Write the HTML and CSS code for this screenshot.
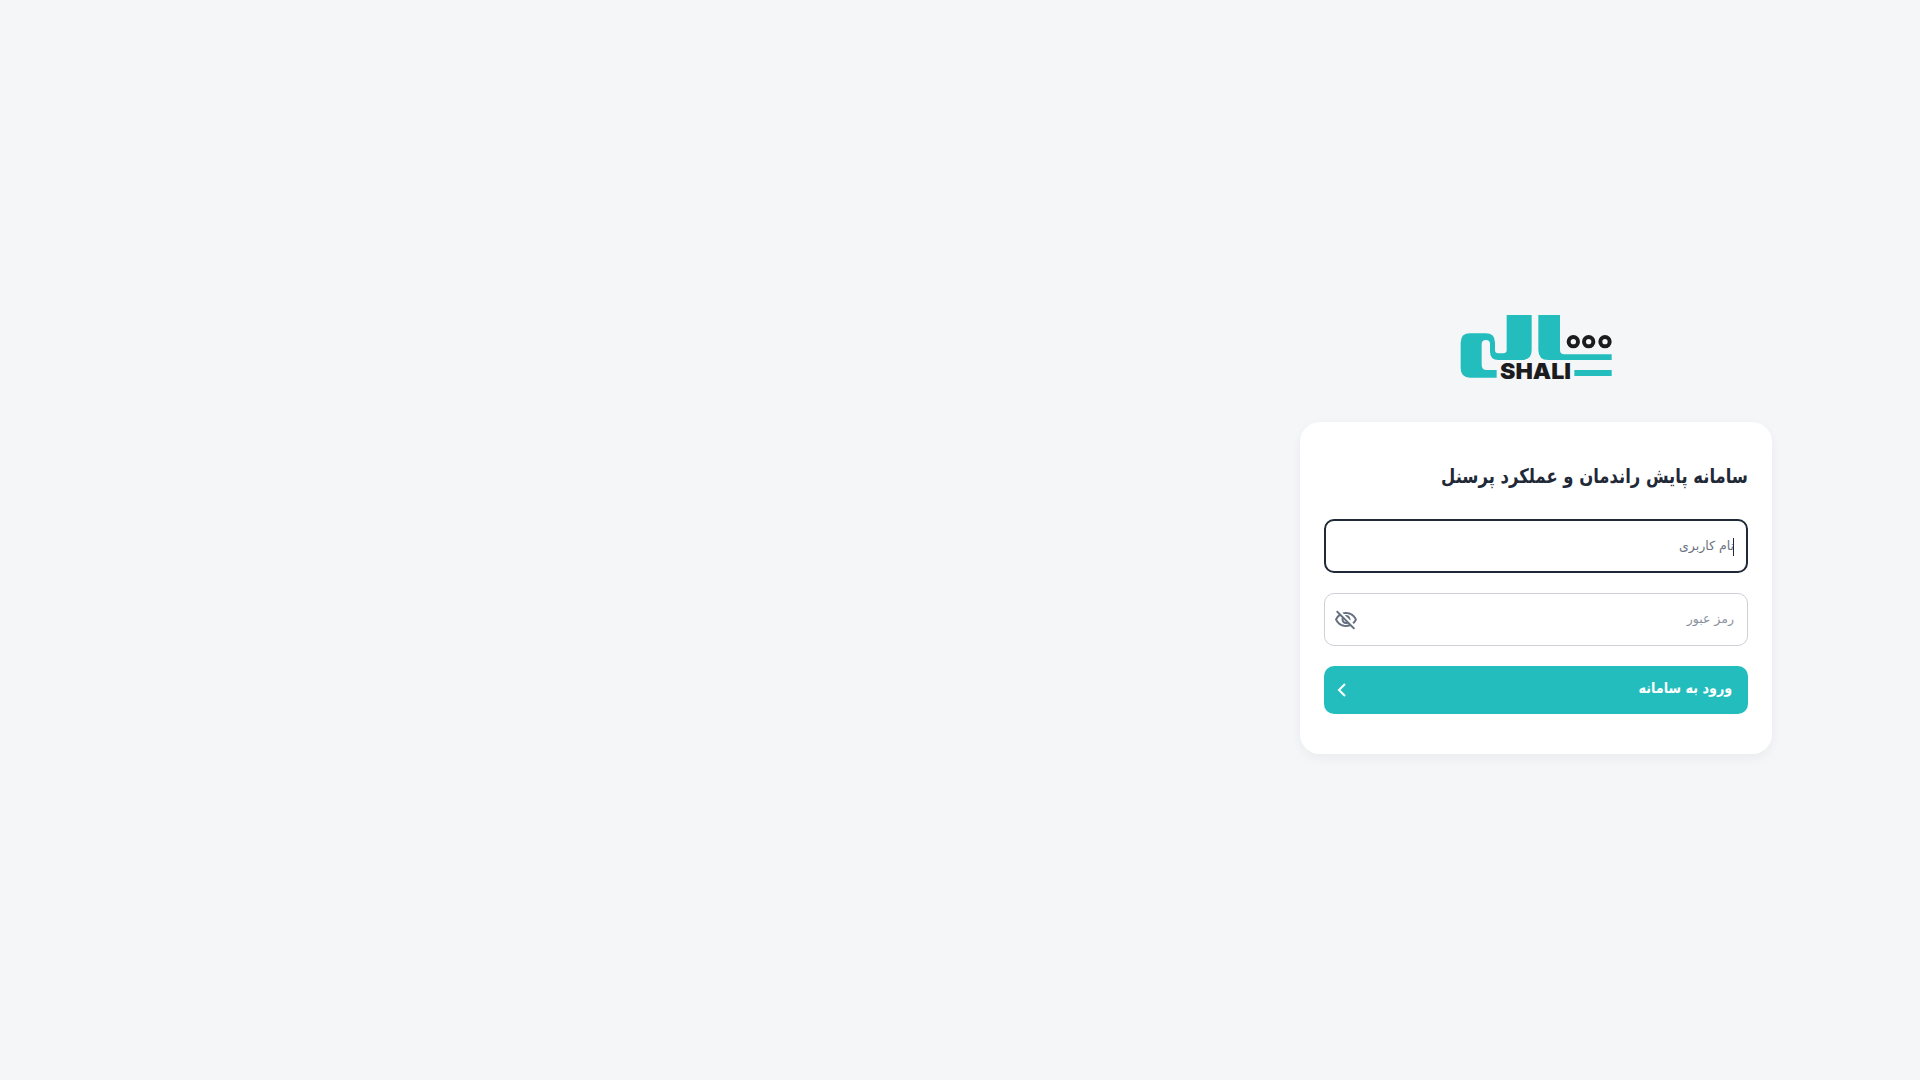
FILE: index.html
```html
<!DOCTYPE html>
<html lang="fa" dir="rtl">
<head>
  <meta charset="UTF-8">
  <meta name="viewport" content="width=device-width, initial-scale=1.0">
  <title>سامانه پایش راندمان و عملکرد پرسنل</title>
  <link rel="stylesheet" href="styles.css">
</head>
<body>
<div class="login-side">
  <svg class="logo" viewBox="60 45 456 195" width="152" height="65" aria-label="Shali">
    <path class="logo-teal" d="M62 128Q62 100 90 100L137 100Q165 100 165 128L165 150Q165 160 175 160L190 160Q200 160 200 150L200 45L275 45L275 150Q275 180 245 180L175 180Q150 180 150 155L150 132Q150 120 138 120Q125 120 125 132L125 195Q125 210 140 210L170 210L170 233L90 233Q62 233 62 205Z"/>
    <path class="logo-teal" d="M295 45L360 45L360 150Q360 163 373 163L515 163L515 180L325 180Q295 180 295 150Z"/>
    <rect class="logo-teal" x="403" y="210" width="112" height="18"/>
    <circle class="logo-dot" cx="400" cy="125" r="14"/>
    <circle class="logo-dot" cx="446" cy="125" r="14"/>
    <circle class="logo-dot" cx="495" cy="125" r="14"/>
    <text class="logo-text" x="180" y="238" textLength="213" lengthAdjust="spacingAndGlyphs" direction="ltr">SHALI</text>
  </svg>
  <div class="card">
    <h1 class="card-title">سامانه پایش راندمان و عملکرد پرسنل</h1>
    <form class="login-form">
      <div class="field field-active">
        <input class="field-input" type="text" placeholder="نام کاربری">
        <span class="caret"></span>
      </div>
      <div class="field">
        <input class="field-input" type="password" placeholder="رمز عبور">
        <svg class="eye" viewBox="0 0 24 24" width="24" height="24">
          <path d="M12 6c3.79 0 7.17 2.13 8.82 5.5-.59 1.22-1.42 2.27-2.41 3.12l1.41 1.41c1.39-1.23 2.49-2.77 3.18-4.53C21.27 7.11 17 4 12 4c-1.27 0-2.49.2-3.64.57l1.65 1.65C10.66 6.09 11.32 6 12 6zm-1.07 1.14L13 9.21c.57.25 1.03.71 1.28 1.28l2.07 2.07c.08-.34.14-.7.14-1.07C16.5 9.01 14.48 7 12 7c-.37 0-.72.05-1.07.14zM2.01 3.87l2.68 2.68C3.06 7.83 1.77 9.53 1 11.5 2.73 15.89 7 19 12 19c1.52 0 2.98-.29 4.32-.82l3.42 3.42 1.41-1.41L3.42 2.45 2.01 3.87zm7.5 7.5l2.61 2.61c-.04.01-.08.02-.12.02-1.38 0-2.5-1.12-2.5-2.5 0-.05.01-.08.01-.13zm-3.4-3.4l1.75 1.75c-.23.55-.36 1.15-.36 1.78 0 2.48 2.02 4.5 4.5 4.5.63 0 1.23-.13 1.77-.36l.98.98c-.88.24-1.8.38-2.75.38-3.79 0-7.17-2.13-8.82-5.5.7-1.43 1.72-2.61 2.93-3.53z"/>
        </svg>
      </div>
      <button class="submit-btn" type="button">
        <span>ورود به سامانه</span>
        <svg class="chevron" viewBox="0 0 10 16" width="10" height="16">
          <path d="M8 2L2 8l6 6"/>
        </svg>
      </button>
    </form>
  </div>
</div>
</body>
</html>
```

FILE: styles.css
```css
* {
  margin: 0;
  padding: 0;
  box-sizing: border-box;
}

body {
  display: flex;
  justify-content: flex-start;
  height: 100vh;
  background: #f4f6f8;
  font-family: "DejaVu Sans", sans-serif;
  overflow: hidden;
}

.login-side {
  width: 40%;
  display: flex;
  flex-direction: column;
  justify-content: center;
  align-items: center;
  gap: 42px;
  padding-bottom: 11px;
}

.logo {
  overflow: visible;
}

.logo-teal {
  fill: #24bdbd;
}

.logo-dot {
  fill: none;
  stroke: #1c1c1e;
  stroke-width: 12;
}

.logo-text {
  font-family: "Inter", sans-serif;
  font-weight: 900;
  font-size: 66px;
  fill: #1c1c1e;
}

.card {
  width: 472px;
  height: 332px;
  padding: 40px 24px;
  background: #fff;
  border-radius: 20px;
  box-shadow: 0 4px 12px rgba(31, 41, 55, 0.05);
}

.card-title {
  height: 32px;
  margin-top: -2px;
  margin-bottom: 27px;
  color: #1f2937;
  font-size: 20px;
  font-weight: 700;
  line-height: 32px;
  white-space: nowrap;
  transform: scaleX(0.82);
  transform-origin: right center;
}

.login-form {
  display: flex;
  flex-direction: column;
  gap: 20px;
}

.field {
  position: relative;
  height: 53px;
}

.field-active {
  height: 54px;
}

.field-input {
  width: 100%;
  height: 100%;
  padding: 0 13px 2px;
  background: #fff;
  border: 1px solid #cdd0d7;
  border-radius: 10px;
  outline: none;
  font-family: inherit;
  font-size: 12.5px;
  caret-color: transparent;
}

.field-input::placeholder {
  color: #8b93a1;
}

.field-active .field-input {
  padding: 0 12px 2px;
  border: 2.5px solid #1f2937;
}

.field-active .field-input::placeholder {
  color: #6b7280;
}

.caret {
  position: absolute;
  top: 19px;
  right: 14px;
  width: 1px;
  height: 18px;
  background: #1f2937;
}

.eye {
  position: absolute;
  top: 15px;
  left: 10px;
  fill: #64707f;
}

.submit-btn {
  display: flex;
  justify-content: space-between;
  align-items: center;
  width: 100%;
  height: 48px;
  padding: 0 16px 0 13px;
  background: #24bdbd;
  border: none;
  border-radius: 10px;
  color: #fff;
  font-family: inherit;
  font-size: 15px;
  font-weight: 700;
  cursor: pointer;
}

.submit-btn span {
  margin-bottom: 4px;
  transform: scaleX(0.85);
  transform-origin: right center;
}

.chevron {
  fill: none;
  stroke: #fff;
  stroke-width: 2;
}
```
